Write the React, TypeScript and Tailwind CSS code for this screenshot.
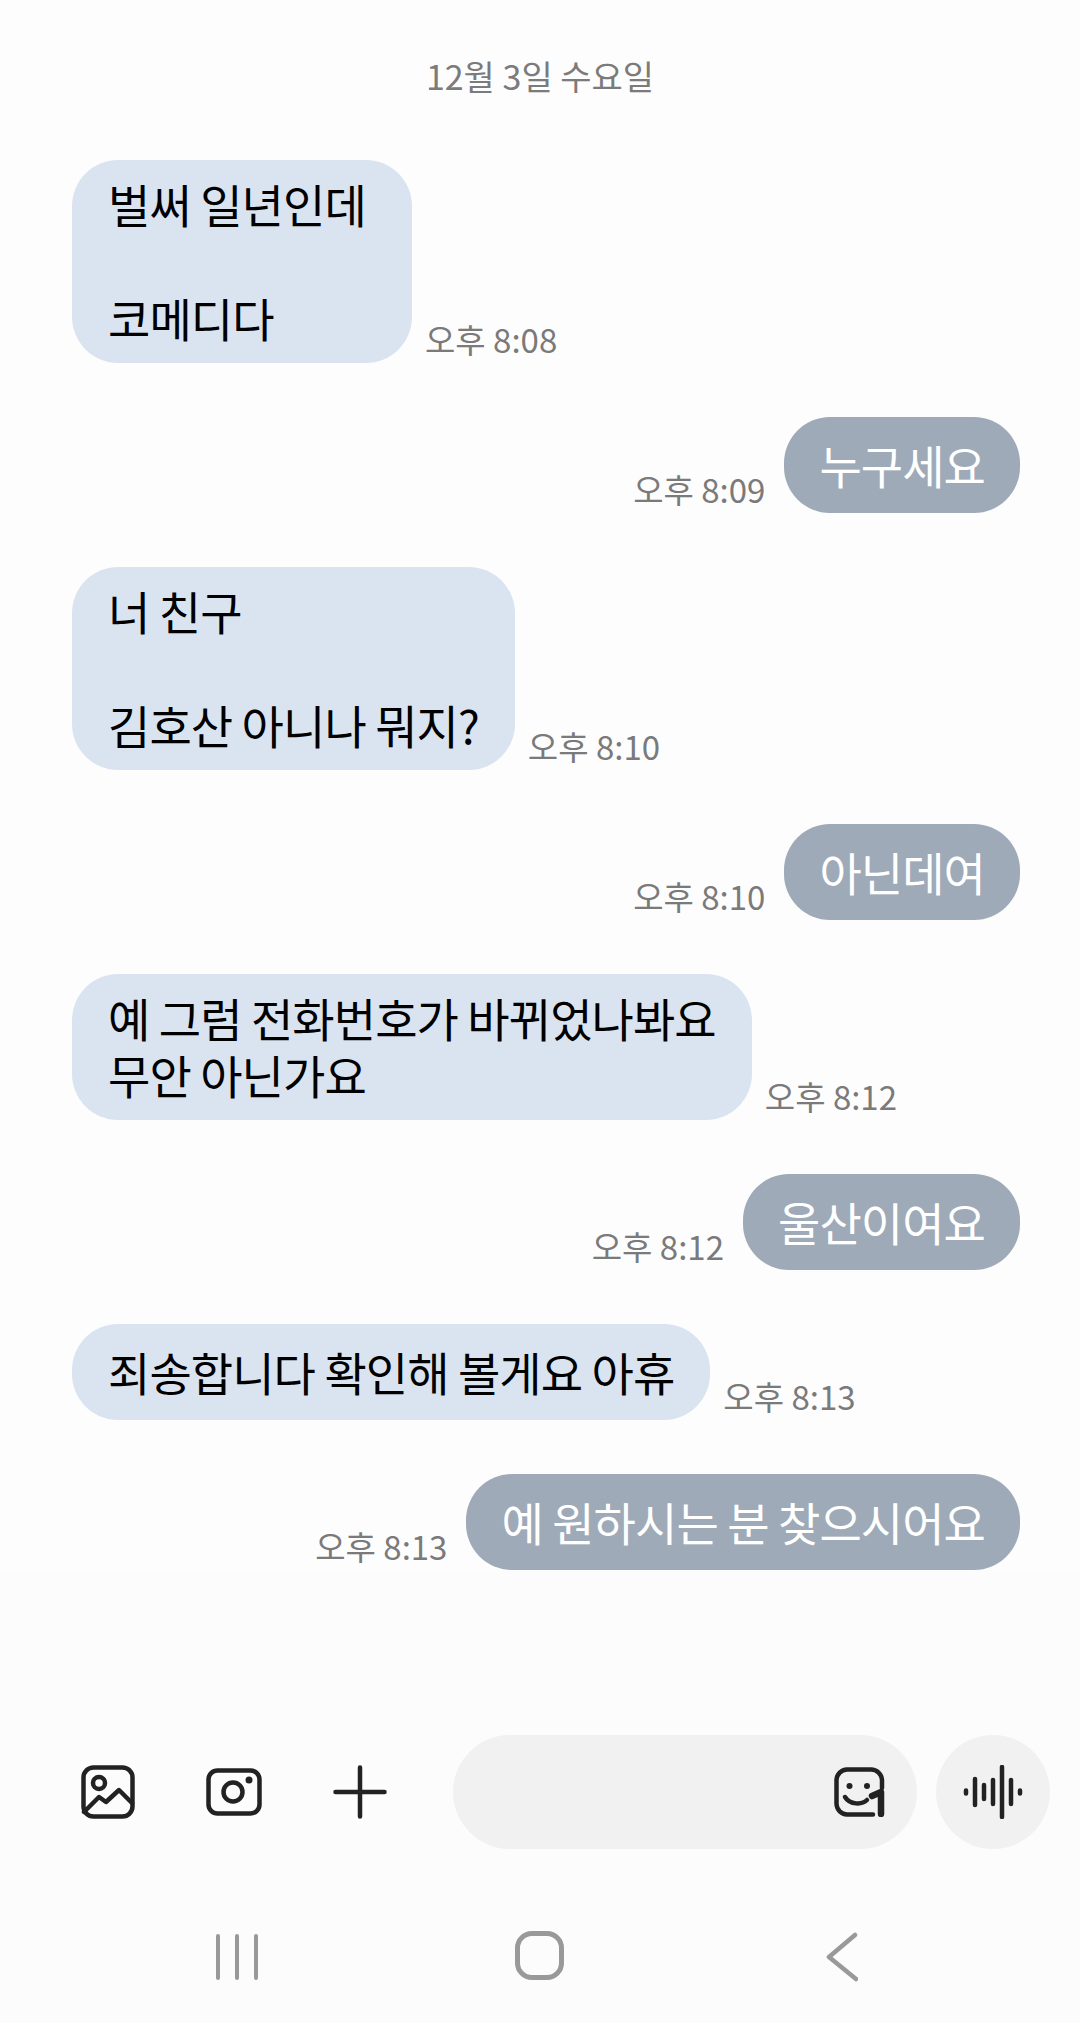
const messages = [
  { mine: false, text: "벌써 일년인데\n\n코메디다", time: "오후 8:08" },
  { mine: true, text: "누구세요", time: "오후 8:09" },
  { mine: false, text: "너 친구\n\n김호산 아니나 뭐지?", time: "오후 8:10" },
  { mine: true, text: "아닌데여", time: "오후 8:10" },
  { mine: false, text: "예 그럼 전화번호가 바뀌었나봐요\n무안 아닌가요", time: "오후 8:12" },
  { mine: true, text: "울산이여요", time: "오후 8:12" },
  { mine: false, text: "죄송합니다 확인해 볼게요 아휴", time: "오후 8:13" },
  { mine: true, text: "예 원하시는 분 찾으시어요", time: "오후 8:13" },
];

function Message({ mine, text, time }: { mine: boolean; text: string; time: string }) {
  const stamp = (
    <span className="mb-[4px] text-[33px] leading-[40px] text-[#7a7a7a] whitespace-nowrap">{time}</span>
  );
  return (
    <div className={`flex items-end ${mine ? "justify-end gap-[19px] pr-[60px]" : "justify-start gap-[13px] pl-[72px]"}`}>
      {mine && stamp}
      <div
        className={`flex min-h-[96px] items-center rounded-[46px] pt-[15px] pb-[17px] text-[46px] leading-[57px] tracking-[-0.02em] whitespace-pre-line ${
          mine ? "bg-[#9eaab8] px-[35px] text-white" : "min-w-[340px] bg-[#dae4f0] px-[36px] text-black"
        }`}
      >
        {text}
      </div>
      {!mine && stamp}
    </div>
  );
}

export default function App() {
  return (
    <div className="flex h-[2023px] w-[1080px] flex-col overflow-hidden bg-[#fefdfe] font-['Noto_Sans_CJK_KR','Noto_Sans',sans-serif]">
      {/* Date */}
      <div className="pt-[56px] text-center text-[34px] leading-[40px] text-[#7b7b7b]">12월 3일 수요일</div>

      {/* Messages */}
      <div className="mt-[64px] flex flex-col gap-[54px]">
        {messages.map((m, i) => (
          <Message key={i} {...m} />
        ))}
      </div>

      {/* Input bar */}
      <div className="mt-auto bg-[#fcfcfc] pt-[165px]">
        <div className="flex items-center pl-[45px]">
          <div className="flex h-[114px] w-[126px] items-center justify-center">
            <svg width="54" height="54" viewBox="0 0 54 54" fill="none" stroke="#222" strokeWidth="4.500" strokeLinecap="round" strokeLinejoin="round">
              <rect x="2.500" y="2.500" width="49" height="49" rx="10" />
              <circle cx="18" cy="18" r="6" />
              <path d="M3 47 L18 32 L25 37 L38 25 L51 38" />
            </svg>
          </div>
          <div className="flex h-[114px] w-[126px] items-center justify-center">
            <svg width="56" height="48" viewBox="0 0 56 48" fill="none" stroke="#222" strokeWidth="4.500">
              <rect x="2.500" y="2.500" width="51" height="43" rx="9" />
              <circle cx="27" cy="24" r="9.5" />
              <circle cx="43" cy="12" r="3.5" fill="#222" stroke="none" />
            </svg>
          </div>
          <div className="flex h-[114px] w-[126px] items-center justify-center">
            <svg width="54" height="54" viewBox="0 0 54 54" fill="none" stroke="#222" strokeWidth="4.500" strokeLinecap="round">
              <path d="M27 2.500 V51.500 M2.500 27 H51.500" />
            </svg>
          </div>
          <div className="ml-[30px] flex h-[114px] w-[464px] items-center justify-end rounded-full bg-[#f2f1f2] pr-[31px]">
            <svg width="52" height="50" viewBox="0 0 52 50" fill="none" stroke="#222" strokeWidth="4.500" strokeLinecap="round" strokeLinejoin="round">
              <path d="M48 21 V13 A11 11 0 0 0 37 2.500 H13 A11 11 0 0 0 2.500 13 V37 A11 11 0 0 0 13 47.500 H39" />
              <circle cx="15.500" cy="19" r="3" fill="#222" stroke="none" />
              <circle cx="33" cy="19" r="3" fill="#222" stroke="none" />
              <path d="M11 30 C16 38 28 38 33 33" />
              <path d="M38 29 L47 25 V47" strokeWidth="6.500" />
            </svg>
          </div>
          <div className="ml-[19px] flex h-[114px] w-[114px] items-center justify-center rounded-full bg-[#f2f1f2]">
            <svg width="60" height="54" viewBox="0 0 60 54" fill="none" stroke="#222" strokeWidth="4.500" strokeLinecap="round">
              <path d="M3 25.500 V28.500 M12 14 V40 M21 20 V34 M30 15 V39 M39 2 V52 M48 15 V39 M57 25.500 V28.500" />
            </svg>
          </div>
        </div>

        {/* Navigation */}
        <div className="grid h-[46px] grid-cols-3 px-[85px] mt-[82px] mb-[46px]">
          <div className="flex items-center justify-center gap-[15px]">
            <div className="h-[46px] w-[4px] rounded-full bg-[#999]" />
            <div className="h-[46px] w-[4px] rounded-full bg-[#999]" />
            <div className="h-[46px] w-[4px] rounded-full bg-[#999]" />
          </div>
          <div className="flex items-center justify-center">
            <div className="mb-[3px] h-[49px] w-[49px] rounded-[17px] border-[5px] border-[#999]" />
          </div>
          <div className="flex items-center justify-center pr-[3px]">
            <svg width="32" height="50" viewBox="0 0 32 50" fill="none" stroke="#999" strokeWidth="4.500" strokeLinecap="round" strokeLinejoin="round">
              <path d="M29 3 L3 25 L30 47" />
            </svg>
          </div>
        </div>
      </div>
    </div>
  );
}
